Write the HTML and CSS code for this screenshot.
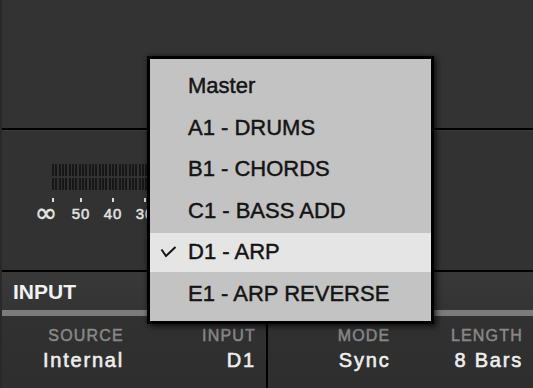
FILE: index.html
```html
<!DOCTYPE html>
<html>
<head>
    <meta charset="UTF-8">
    <title>Group Input</title>
    <link rel="stylesheet" href="styles.css">
</head>
<body>
    <div class="screen">
        <div class="top-panel"></div>

        <div class="meter-panel">
            <div class="meter">
                <div class="meter-bars"></div>
                <div class="meter-bars"></div>
            </div>
            <div class="meter-ticks">
                <span></span><span></span><span></span><span></span>
            </div>
            <div class="meter-scale">
                <span class="infinity">∞</span><span>50</span><span>40</span><span>30</span>
            </div>
        </div>

        <div class="section-head">INPUT</div>
        <div class="section-bar"></div>

        <div class="params">
            <div class="param-group">
                <div class="param">
                    <div class="param-label">SOURCE</div>
                    <div class="param-value">Internal</div>
                </div>
                <div class="param">
                    <div class="param-label">INPUT</div>
                    <div class="param-value">D1</div>
                </div>
            </div>
            <div class="param-group">
                <div class="param">
                    <div class="param-label">MODE</div>
                    <div class="param-value">Sync</div>
                </div>
                <div class="param">
                    <div class="param-label">LENGTH</div>
                    <div class="param-value">8 Bars</div>
                </div>
            </div>
        </div>

        <ul class="menu">
            <li class="menu-item"><span class="check"></span>Master</li>
            <li class="menu-item"><span class="check"></span>A1 - DRUMS</li>
            <li class="menu-item"><span class="check"></span>B1 - CHORDS</li>
            <li class="menu-item"><span class="check"></span>C1 - BASS ADD</li>
            <li class="menu-item selected">
                <span class="check">
                    <svg width="17" height="12" viewBox="0 0 17 12">
                        <polyline points="1.5,3.5 6,10 15.5,1" fill="none" stroke="#141414" stroke-width="2"/>
                    </svg>
                </span>D1 - ARP
            </li>
            <li class="menu-item"><span class="check"></span>E1 - ARP REVERSE</li>
        </ul>
    </div>
</body>
</html>
```

FILE: styles.css
```css
body {
    margin: 0;
    background: #333;
    font-family: 'Liberation Sans', Arial, sans-serif;
    overflow: hidden;
}

.screen {
    position: relative;
    width: 533px;
    height: 388px;
    padding-left: 2px;
    box-sizing: border-box;
    background: linear-gradient(to right, #292929 2px, #333 2px);
    overflow: hidden;
}

.top-panel {
    height: 128px;
}

/* Level meter */
.meter-panel {
    height: 140px;
    border-top: 2px solid #000;
    border-bottom: 2px solid #000;
    box-shadow: inset 0 1px 0 #3c3c3c;
    background: #323232;
}

.meter {
    padding-top: 34px;
    margin-left: 50px;
}

.meter-bars {
    width: 110px;
    height: 12px;
    margin-bottom: 2px;
    background: repeating-linear-gradient(90deg, #171717 0, #171717 2px, transparent 2px, transparent 3.33px);
}

.meter-ticks {
    display: flex;
    margin-top: 8px;
    margin-left: 50px;
    gap: 26px;
}

.meter-ticks span {
    width: 2px;
    height: 4px;
    background: #dcdcdc;
}

.meter-ticks span + span + span {
    margin-left: 4px;
}

.meter-scale {
    display: flex;
    margin-top: 4px;
    margin-left: 29px;
    gap: 2px;
    color: #e4e4e4;
    font-size: 15px;
    line-height: 16px;
    letter-spacing: 1px;
    -webkit-text-stroke: 0.5px #e4e4e4;
}

.meter-scale span {
    width: 30px;
    text-align: center;
}

.meter-scale .infinity {
    margin-right: 3px;
    font-family: 'DejaVu Sans', sans-serif;
    font-size: 27px;
    line-height: 14px;
    letter-spacing: 0;
}

/* Input section */
.section-head {
    height: 36px;
    padding: 2px 0 0 11px;
    background: linear-gradient(#393939, #343434);
    color: #f2f2f2;
    font-size: 21px;
    font-weight: 700;
    line-height: 36px;
}

.section-bar {
    height: 6px;
    background: #7b7b7b;
}

.params {
    display: flex;
    height: 72px;
    background: linear-gradient(#313131, #2e2e2e);
}

.param-group {
    display: flex;
    flex: 1;
}

.param-group:first-child {
    flex: 0 0 264px;
    border-right: 2px solid #000;
}

.param {
    flex: 1;
    padding: 11px 10px 0 0;
    text-align: right;
}

.param-label {
    color: #888;
    font-size: 16px;
    line-height: 18px;
    letter-spacing: 1.2px;
    -webkit-text-stroke: 0.5px #888;
}

.param-value {
    margin-top: 3px;
    color: #eee;
    font-size: 20px;
    line-height: 24px;
    letter-spacing: 1.8px;
    -webkit-text-stroke: 0.6px #eee;
}

/* Popup menu */
.menu {
    position: absolute;
    left: 147px;
    top: 56px;
    width: 287px;
    height: 268px;
    margin: 0;
    padding: 8px 0;
    box-sizing: border-box;
    list-style: none;
    background: #c3c3c3;
    border: 3px solid #000;
    box-shadow: 3px 3px 6px rgba(0, 0, 0, 0.55), 0 0 4px rgba(0, 0, 0, 0.4);
}

.menu-item {
    display: flex;
    align-items: center;
    height: 38.5px;
    margin-bottom: 3px;
    padding-left: 10px;
    color: #141414;
    font-size: 22px;
    -webkit-text-stroke: 0.45px #141414;
}

.menu-item:last-child {
    margin-bottom: 0;
}

.menu-item.selected {
    background: #e5e5e5;
}

.check {
    display: flex;
    width: 28px;
}
```
